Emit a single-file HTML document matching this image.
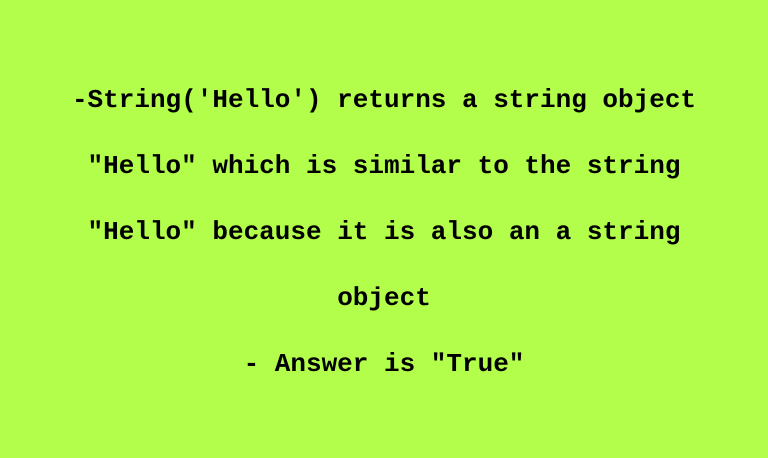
<!DOCTYPE html>
<html><head><style>
html,body{margin:0;padding:0;}
body{width:768px;height:458px;background:#b2fe4a;overflow:hidden;position:relative;}
.t{position:absolute;left:0;top:67px;width:768px;text-align:center;font-family:"Liberation Mono",monospace;font-weight:bold;font-size:26px;line-height:66px;color:#000;}
.t div{white-space:pre;}
</style></head><body>
<div class="t">
<div>-String('Hello') returns a string object</div>
<div>"Hello" which is similar to the string</div>
<div>"Hello" because it is also an a string</div>
<div>object</div>
<div>- Answer is "True"</div>
</div>
</body></html>
